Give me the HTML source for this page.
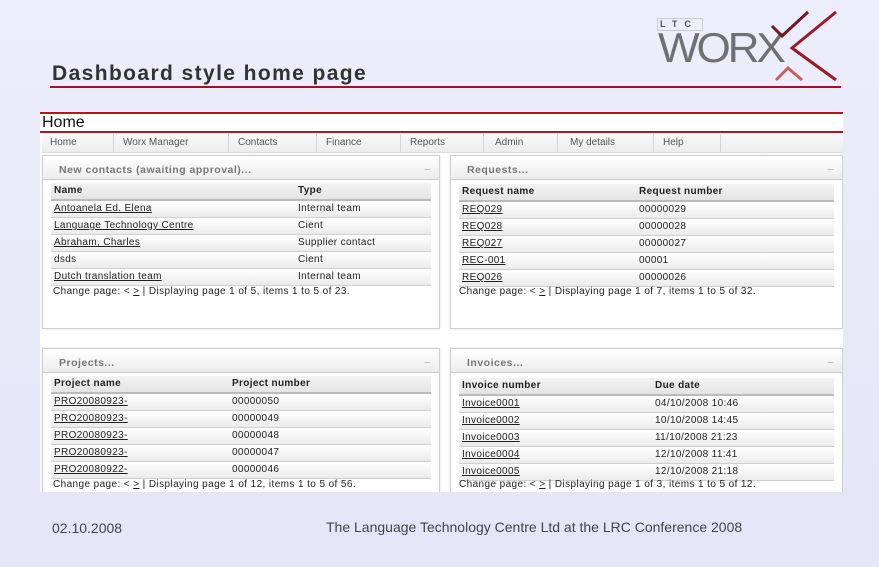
<!DOCTYPE html><html><head><style>
*{margin:0;padding:0;box-sizing:border-box}
body{width:879px;height:567px;overflow:hidden;background:linear-gradient(180deg,#eceefb,#e4e6f8);font-family:"Liberation Sans",sans-serif;position:relative}
.a{position:absolute}
.shot{left:40px;top:112px;width:803px;height:380px;background:#fff;overflow:hidden}
.nav{left:2px;top:22px;width:801px;height:19px;background:linear-gradient(#fafafa,#ececec);border-bottom:1px solid #ddd;font-size:10px;color:#555}
.nav span{position:absolute;top:3px}
.nav i{position:absolute;top:0;width:1px;height:19px;background:#d4d4d4}
.p{background:#fff;border:1px solid #cfcfcf;box-shadow:0 0 2px #ddd;overflow:hidden}
.ph{position:absolute;left:0;top:1px;right:0;height:23px;background:linear-gradient(#fff,#ececec);border-bottom:1px solid #ccc;font-size:10.5px;font-weight:bold;color:#777;padding:7px 0 0 16px;letter-spacing:.5px}
.ph b{position:absolute;right:8px;top:6px;color:#aaa;font-weight:normal}
.t{position:absolute;left:8px;right:8px;font-size:10px;letter-spacing:.35px;color:#222}
.r{height:17px;line-height:16px;background:linear-gradient(#fff,#ebebeb);border-bottom:1px solid #d0d0d0;position:relative;padding-left:3px}
.r.h{font-weight:bold;font-size:10px;background:linear-gradient(#f4f4f4,#e4e4e4);border-bottom:2px solid #bbb;height:18px}
.r span{position:absolute;top:0}
.r u{text-decoration:underline}
.f{position:absolute;left:10px;font-size:10px;letter-spacing:.4px;color:#222}
</style></head><body>
<div class="a" style="left:52px;top:62px;font-size:21px;font-weight:bold;color:#333;letter-spacing:1.4px">Dashboard style home page</div>
<div class="a" style="left:50px;top:86px;width:791px;height:2px;background:#a5111c"></div>
<!-- logo -->
<div class="a" style="left:660px;top:19px;font-size:9px;font-weight:bold;color:#555;letter-spacing:7px">LTC</div>
<div class="a" style="left:657px;top:18px;width:46px;height:13px;border:1px solid #ccc"></div>
<div class="a" style="left:658px;top:27px;font-size:42px;color:#707070;letter-spacing:-3px;line-height:42px;transform:scaleX(1.05);transform-origin:left">WORX</div>
<svg class="a" style="left:770px;top:8px" width="72" height="76"><path d="M2 18 L12 28 L38 4" stroke="#7a1420" stroke-width="3" fill="none"/><path d="M66 4 L22 40 L66 72" stroke="#9b1b24" stroke-width="3" fill="none"/><path d="M6 72 L18 60 L32 72" stroke="#c86060" stroke-width="3" fill="none"/></svg>

<div class="a shot">
<div class="a" style="left:0;top:0;width:803px;height:2px;background:#b01820"></div>
<div class="a" style="left:2px;top:2px;font-size:16px;color:#111">Home</div>
<div class="a" style="left:0;top:19px;width:803px;height:2px;background:#b01820"></div>
<div class="a nav">
<span style="left:8px">Home</span><i style="left:71px"></i>
<span style="left:81px">Worx Manager</span><i style="left:186px"></i>
<span style="left:196px">Contacts</span><i style="left:274px"></i>
<span style="left:284px">Finance</span><i style="left:358px"></i>
<span style="left:368px">Reports</span><i style="left:441px"></i>
<span style="left:453px">Admin</span><i style="left:515px"></i>
<span style="left:528px">My details</span><i style="left:611px"></i>
<span style="left:621px">Help</span><i style="left:678px"></i>
</div>

<!-- panel 1 -->
<div class="a p" style="left:2px;top:43px;width:398px;height:174px">
<div class="ph">New contacts (awaiting approval)...<b>–</b></div>
<div class="t" style="top:27px">
<div class="r h">Name<span style="left:247px">Type</span></div>
<div class="r"><u>Antoanela Ed. Elena</u><span style="left:247px">Internal team</span></div>
<div class="r"><u>Language Technology Centre</u><span style="left:247px">Cient</span></div>
<div class="r"><u>Abraham, Charles</u><span style="left:247px">Supplier contact</span></div>
<div class="r">dsds<span style="left:247px">Cient</span></div>
<div class="r"><u>Dutch translation team</u><span style="left:247px">Internal team</span></div>
</div>
<div class="f" style="top:130px">Change page: &lt; <u>&gt;</u> | Displaying page 1 of 5, items 1 to 5 of 23.</div>
</div>

<!-- panel 2 -->
<div class="a p" style="left:410px;top:43px;width:393px;height:174px">
<div class="ph">Requests...<b>–</b></div>
<div class="t" style="top:28px">
<div class="r h">Request name<span style="left:180px">Request number</span></div>
<div class="r"><u>REQ029</u><span style="left:180px">00000029</span></div>
<div class="r"><u>REQ028</u><span style="left:180px">00000028</span></div>
<div class="r"><u>REQ027</u><span style="left:180px">00000027</span></div>
<div class="r"><u>REC-001</u><span style="left:180px">00001</span></div>
<div class="r"><u>REQ026</u><span style="left:180px">00000026</span></div>
</div>
<div class="f" style="top:130px;left:8px">Change page: &lt; <u>&gt;</u> | Displaying page 1 of 7, items 1 to 5 of 32.</div>
</div>

<!-- panel 3 -->
<div class="a p" style="left:2px;top:236px;width:398px;height:160px">
<div class="ph">Projects...<b>–</b></div>
<div class="t" style="top:27px">
<div class="r h">Project name<span style="left:181px">Project number</span></div>
<div class="r"><u>PRO20080923-</u><span style="left:181px">00000050</span></div>
<div class="r"><u>PRO20080923-</u><span style="left:181px">00000049</span></div>
<div class="r"><u>PRO20080923-</u><span style="left:181px">00000048</span></div>
<div class="r"><u>PRO20080923-</u><span style="left:181px">00000047</span></div>
<div class="r"><u>PRO20080922-</u><span style="left:181px">00000046</span></div>
</div>
<div class="f" style="top:130px">Change page: &lt; <u>&gt;</u> | Displaying page 1 of 12, items 1 to 5 of 56.</div>
</div>

<!-- panel 4 -->
<div class="a p" style="left:410px;top:236px;width:393px;height:160px">
<div class="ph">Invoices...<b>–</b></div>
<div class="t" style="top:29px">
<div class="r h">Invoice number<span style="left:196px">Due date</span></div>
<div class="r"><u>Invoice0001</u><span style="left:196px">04/10/2008 10:46</span></div>
<div class="r"><u>Invoice0002</u><span style="left:196px">10/10/2008 14:45</span></div>
<div class="r"><u>Invoice0003</u><span style="left:196px">11/10/2008 21:23</span></div>
<div class="r"><u>Invoice0004</u><span style="left:196px">12/10/2008 11:41</span></div>
<div class="r"><u>Invoice0005</u><span style="left:196px">12/10/2008 21:18</span></div>
</div>
<div class="f" style="top:130px;left:8px">Change page: &lt; <u>&gt;</u> | Displaying page 1 of 3, items 1 to 5 of 12.</div>
</div>
</div>

<div class="a" style="left:52px;top:520px;font-size:14px;color:#444">02.10.2008</div>
<div class="a" style="left:326px;top:519px;font-size:14px;color:#444">The Language Technology Centre Ltd at the LRC Conference 2008</div>
</body></html>
